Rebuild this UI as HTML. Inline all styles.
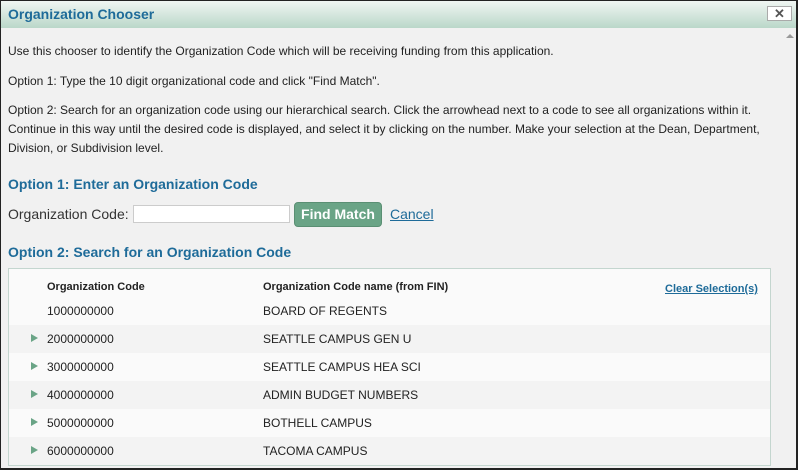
<!DOCTYPE html>
<html><head><style>
*{margin:0;padding:0;box-sizing:border-box}
body{width:798px;height:470px;overflow:hidden;background:#fff;font-family:"Liberation Sans",Arial,sans-serif}
.win{position:absolute;left:0;top:0;width:798px;height:470px;background:#f1f1f1}
.bd{position:absolute;left:0;top:0;width:798px;height:470px;border:1px solid #222;border-right:2px solid #222;border-bottom:2px solid #222;z-index:5}
.title{position:absolute;left:0;top:0;width:798px;height:28px;background:linear-gradient(#f2f7f4,#bad7c9);}
.title span{position:absolute;left:8px;top:6px;font-size:14px;font-weight:bold;color:#1e6b99}
.close{position:absolute;left:767px;top:6px;width:25px;height:15px;background:#fff;border:1px solid #aaa;font-size:13px;line-height:13px;text-align:center;color:#555;font-weight:bold}
.up{position:absolute;left:786px;top:34px;width:0;height:0;border-left:4px solid transparent;border-right:4px solid transparent;border-bottom:4px solid #999}
p{position:absolute;left:8px;font-size:12px;color:#222;line-height:19px}
h3{position:absolute;left:8px;font-size:14px;font-weight:bold;color:#1e6b99}
.lbl{position:absolute;left:8px;top:206px;font-size:14px;color:#333}
.inp{position:absolute;left:133px;top:205px;width:157px;height:18px;background:#fff;border:1px solid #ccc}
.btn{position:absolute;left:294px;top:202px;width:88px;height:25px;background:#6aa486;border:1px solid #5a8f73;border-radius:4px;color:#fff;font-weight:bold;font-size:14px;text-align:center;line-height:23px}
.cancel{position:absolute;left:390px;top:206px;font-size:14px;color:#1e6b99;text-decoration:underline}
.tbl{position:absolute;left:8px;top:268px;width:763px;height:198px;border:1px solid #c4d6cf;background:#fafafa}
.row{position:absolute;left:0;width:761px;height:28px;font-size:12px;color:#222}
.row .c{position:absolute;left:38px;top:7px}
.row .n{position:absolute;left:254px;top:7px}
.row .a{position:absolute;left:22px;top:9px;width:0;height:0;border-top:4px solid transparent;border-bottom:4px solid transparent;border-left:7px solid #6aa486}
.hd{font-weight:bold;font-size:11px}
.clr{position:absolute;left:656px;top:14px;font-size:11px;font-weight:bold;color:#1e6b99;text-decoration:underline}
</style></head><body>
<div class="win">
<div class="title"><span>Organization Chooser</span><div class="close">✕</div></div>
<div class="up"></div>
<p style="top:42px">Use this chooser to identify the Organization Code which will be receiving funding from this application.</p>
<p style="top:72px">Option 1: Type the 10 digit organizational code and click "Find Match".</p>
<p style="top:101px">Option 2: Search for an organization code using our hierarchical search. Click the arrowhead next to a code to see all organizations within it.<br>Continue in this way until the desired code is displayed, and select it by clicking on the number. Make your selection at the Dean, Department,<br>Division, or Subdivision level.</p>
<h3 style="top:176px">Option 1: Enter an Organization Code</h3>
<div class="lbl">Organization Code:</div><div class="inp"></div>
<div class="btn">Find Match</div><div class="cancel">Cancel</div>
<h3 style="top:244px">Option 2: Search for an Organization Code</h3>
<div class="tbl">
<div class="row hd" style="top:5px"><span class="c">Organization Code</span><span class="n">Organization Code name (from FIN)</span></div>
<div class="clr">Clear Selection(s)</div>
<div class="row" style="top:28px;background:#fafafa"><span class="c">1000000000</span><span class="n">BOARD OF REGENTS</span></div>
<div class="row" style="top:56px;background:#f3f3f3"><i class="a"></i><span class="c">2000000000</span><span class="n">SEATTLE CAMPUS GEN U</span></div>
<div class="row" style="top:84px;background:#fafafa"><i class="a"></i><span class="c">3000000000</span><span class="n">SEATTLE CAMPUS HEA SCI</span></div>
<div class="row" style="top:112px;background:#f3f3f3"><i class="a"></i><span class="c">4000000000</span><span class="n">ADMIN BUDGET NUMBERS</span></div>
<div class="row" style="top:140px;background:#fafafa"><i class="a"></i><span class="c">5000000000</span><span class="n">BOTHELL CAMPUS</span></div>
<div class="row" style="top:168px;background:#f3f3f3"><i class="a"></i><span class="c">6000000000</span><span class="n">TACOMA CAMPUS</span></div>
</div>
</div>
<div class="bd"></div>
</body></html>
